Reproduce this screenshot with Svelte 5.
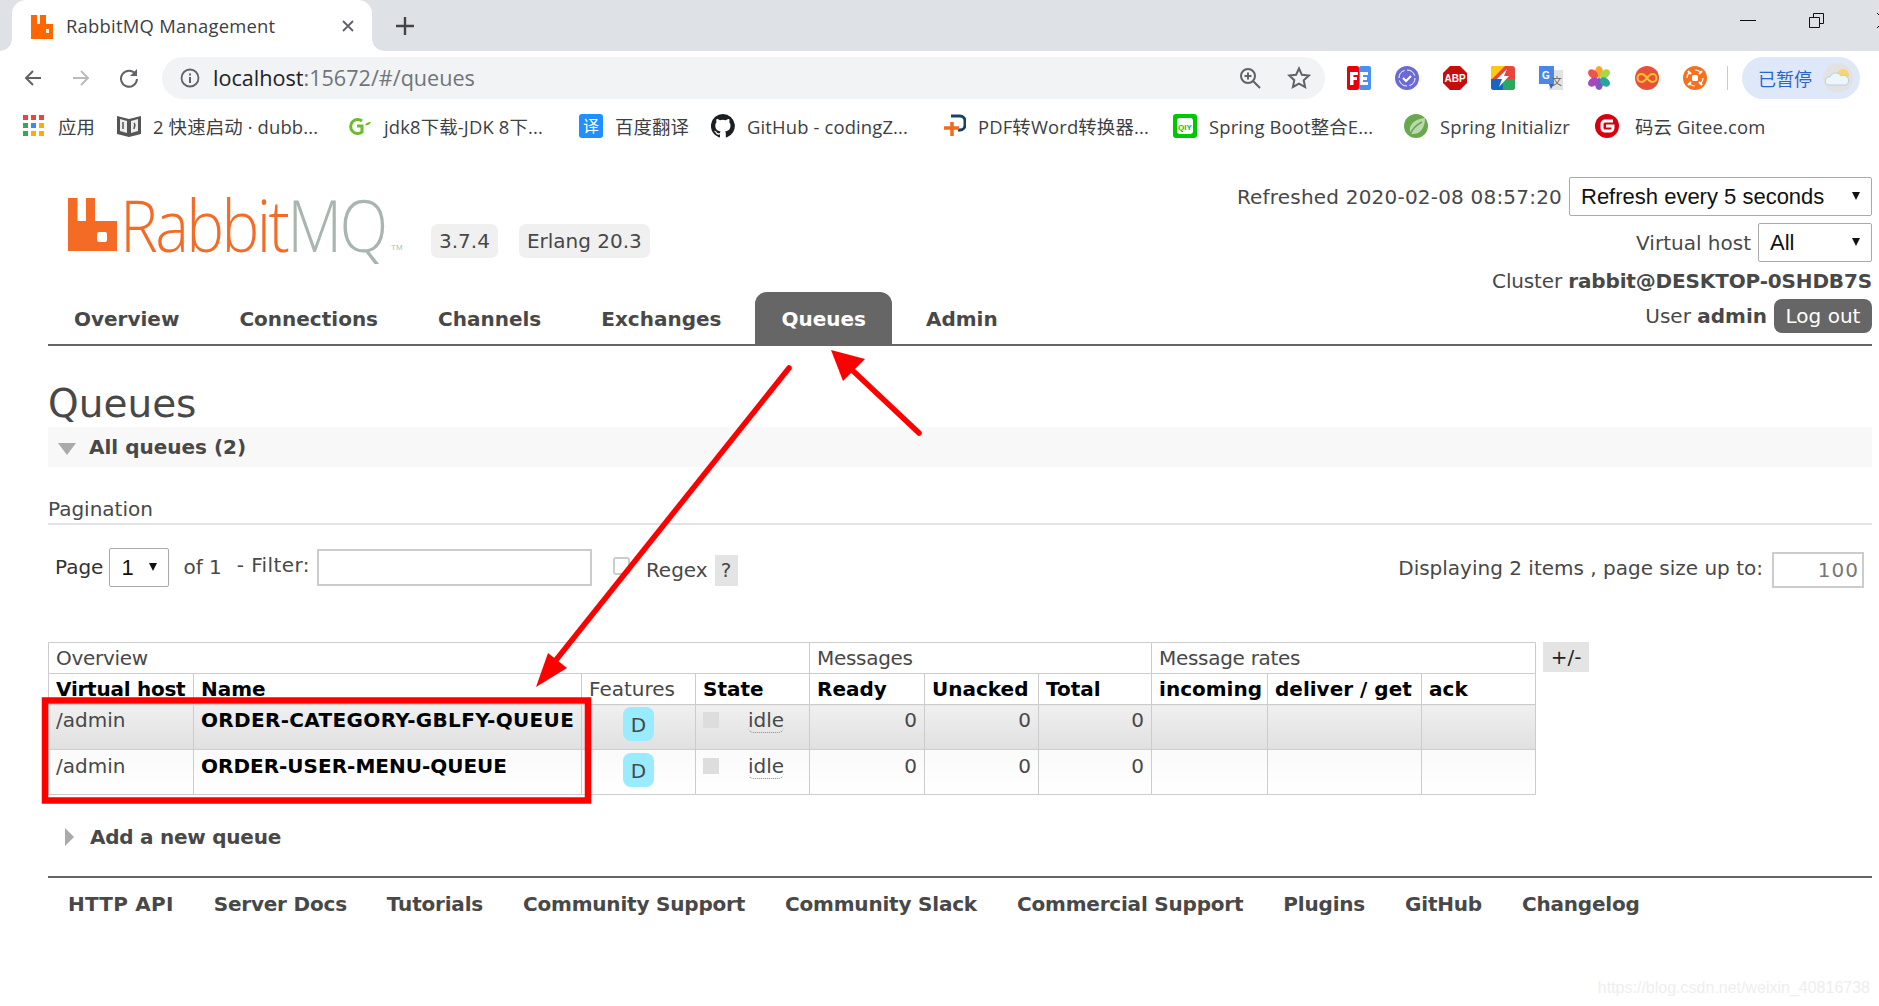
<script>
	const bookmarks = [
		{ id: 'book', label: '2 快速启动 · dubb...', w: 199 },
		{ id: 'g', label: 'jdk8下载-JDK 8下...', w: 199 },
		{ id: 'fy', label: '百度翻译', w: 100 },
		{ id: 'gh', label: 'GitHub - codingZ...', w: 199 },
		{ id: 'pdf', label: 'PDF转Word转换器...', w: 199 },
		{ id: 'iq', label: 'Spring Boot整合E...', w: 199 },
		{ id: 'spring', label: 'Spring Initializr', w: 159 },
		{ id: 'gitee', label: '码云 Gitee.com', w: 170 }
	];
	const navItems = ['Overview', 'Connections', 'Channels', 'Exchanges', 'Queues', 'Admin'];
	const footer = ['HTTP API', 'Server Docs', 'Tutorials', 'Community Support', 'Community Slack', 'Commercial Support', 'Plugins', 'GitHub', 'Changelog'];
	const queues = [
		{ name: 'ORDER-CATEGORY-GBLFY-QUEUE', cls: 'alt1' },
		{ name: 'ORDER-USER-MENU-QUEUE', cls: 'alt2' }
	];
	const colWidths = [145, 388, 114, 114, 115, 114, 113, 116, 154, 114];
</script>

<div class="root">
	<div class="tabstrip">
		<div class="tab">
			<svg class="favicon" viewBox="0 0 24 24"><path fill="#ff6600" d="M1 0h6v9h3V0h6v9h7v15H1z"/><rect x="16" y="14" width="3" height="4" fill="#fff"/></svg>
			<span class="tab-title">RabbitMQ Management</span>
			<svg class="tab-x" viewBox="0 0 12 12"><path d="M1 1l10 10M11 1L1 11" stroke="#5f6368" stroke-width="1.8"/></svg>
		</div>
		<svg class="newtab" viewBox="0 0 18 18"><path d="M9 0v18M0 9h18" stroke="#444" stroke-width="2.4"/></svg>
		<div class="winctl">
			<span class="min"></span>
			<svg class="restore" viewBox="0 0 15 15"><path d="M.5 4.5h10v10H.5zM4.500 4.500v-4h10v10h-4" fill="none" stroke="#111"/></svg>
			<svg class="restore" viewBox="0 0 15 15"><path d="M0 0l15 15M15 0L0 15" stroke="#111"/></svg>
		</div>
	</div>

	<div class="toolbar">
		<svg class="nav-ic" viewBox="0 0 20 20"><path d="M18 10H3M10 3l-7 7 7 7" fill="none" stroke="#5f6368" stroke-width="2"/></svg>
		<svg class="nav-ic" viewBox="0 0 20 20"><path d="M2 10h15M10 3l7 7-7 7" fill="none" stroke="#b9bbbe" stroke-width="2"/></svg>
		<svg class="nav-ic" viewBox="0 0 20 20"><path d="M16.500 6A8 8 0 1 0 18 11" fill="none" stroke="#5f6368" stroke-width="2"/><path d="M18 1v7h-7z" fill="#5f6368"/></svg>
		<div class="omnibox">
			<svg class="info" viewBox="0 0 20 20"><circle cx="10" cy="10" r="8.500" fill="none" stroke="#5f6368" stroke-width="1.800"/><path d="M10 9v6M10 5.500v2" stroke="#5f6368" stroke-width="2"/></svg>
			<span class="url">localhost<span class="url-rest">:15672/#/queues</span></span>
			<svg class="zoom-ic" viewBox="0 0 22 22"><circle cx="9" cy="9" r="7" fill="none" stroke="#5f6368" stroke-width="2"/><path d="M14 14l7 7M9 5.500v7M5.500 9h7" stroke="#5f6368" stroke-width="2"/></svg>
			<svg class="star" viewBox="0 0 24 24"><path d="M12 2.500l2.900 6.300 6.900.8-5.100 4.700 1.400 6.800L12 17.700 5.900 21l1.400-6.800-5.100-4.700 6.900-.8z" fill="none" stroke="#5f6368" stroke-width="2"/></svg>
		</div>
		<div class="exts">
			<svg viewBox="0 0 24 24"><rect width="12" height="24" rx="2" fill="#e8000b"/><rect x="12" width="12" height="24" rx="2" fill="#4a90f0"/><path d="M3 6h8v3H6.500v2H10v3H6.500v5H3zM13 6h8v3h-5v2h4v3h-4v2h5v3h-8z" fill="#fff"/></svg>
			<svg viewBox="0 0 24 24"><circle cx="12" cy="12" r="12" fill="#6b6bd6"/><circle cx="12" cy="12" r="8" fill="none" stroke="#fff" stroke-width="1" stroke-dasharray="10 2.500"/><path d="M8 12l3 3 5-5" fill="none" stroke="#fff" stroke-width="2"/></svg>
			<svg viewBox="0 0 24 24"><path d="M7 0h10l7 7v10l-7 7H7l-7-7V7z" fill="#c70d0c"/><text x="12" y="16" text-anchor="middle" class="abp">ABP</text></svg>
			<svg viewBox="0 0 24 24"><rect width="24" height="24" rx="3" fill="#e8453c"/><path d="M0 3a3 3 0 0 1 3-3h11L0 14z" fill="#fbcb12"/><path d="M0 13h12v11H3a3 3 0 0 1-3-3z" fill="#1667c5"/><path d="M12 13h12v8a3 3 0 0 1-3 3h-9z" fill="#28a861"/><path d="M16 3L6 13h5l-3 8 10-11h-5z" fill="#fff"/></svg>
			<svg viewBox="0 0 24 24"><rect x="10" y="4" width="14" height="20" fill="#e3e3e3"/><path d="M0 0h15v18H0z" fill="#4a86e8"/><path d="M10 18h5l-3 5z" fill="#3a62b0"/><text x="7" y="13" text-anchor="middle" class="gt">G</text><text x="18" y="19" text-anchor="middle" class="gt2">文</text></svg>
			<svg viewBox="0 0 24 24">
				<ellipse cx="12" cy="6" rx="4" ry="6" fill="#f9a825"/><ellipse cx="12" cy="18" rx="4" ry="6" fill="#7e57c2"/>
				<ellipse cx="6" cy="8" rx="4" ry="5.500" fill="#ef5350" transform="rotate(-50 6 8)"/><ellipse cx="18" cy="8" rx="4" ry="5.500" fill="#a5d64c" transform="rotate(50 18 8)"/>
				<ellipse cx="6" cy="16" rx="4" ry="5.500" fill="#ab47bc" transform="rotate(50 6 16)"/><ellipse cx="18" cy="16" rx="4" ry="5.500" fill="#26a69a" transform="rotate(-50 18 16)"/>
			</svg>
			<svg viewBox="0 0 24 24"><circle cx="12" cy="12" r="12" fill="#e94f3d"/><path d="M12 12c-2-3-3.500-4-5.500-4a4 4 0 0 0 0 8c2 0 3.500-1 5.500-4s3.500-4 5.500-4a4 4 0 0 1 0 8c-2 0-3.500-1-5.500-4z" fill="none" stroke="#f7c325" stroke-width="2"/></svg>
			<svg viewBox="0 0 24 24"><circle cx="12" cy="12" r="12" fill="#f4711f"/><rect x="9" y="9" width="6" height="6" rx="1.500" fill="#fff"/><path d="M5 5l3 3M19 5l-3 3M5 19l3-3M19 19l-3-3" stroke="#fff" stroke-width="2"/><circle cx="12" cy="12" r="8" fill="none" stroke="#fff" stroke-width="1.200" stroke-dasharray="6 6.500"/></svg>
		</div>
		<span class="divider"></span>
		<div class="paused">
			<span>已暂停</span>
			<span class="avatar">
				<svg viewBox="0 0 30 30"><circle cx="15" cy="15" r="15" fill="#e2e2e2"/><circle cx="20" cy="12" r="6" fill="#f5d76e"/><path d="M6 22a4 4 0 0 1 1-8 6 6 0 0 1 11-1 5 5 0 0 1 5 9z" fill="#eef6fb" stroke="#b8d0e2"/></svg>
			</span>
		</div>
	</div>

	<div class="bookmarks">
		<div class="bm apps">
			<span class="dots">
				<i class="r"></i><i class="r"></i><i class="r"></i>
				<i class="gr"></i><i class="b"></i><i class="y"></i>
				<i class="gr"></i><i class="y"></i><i class="y"></i>
			</span>
			<span>应用</span>
		</div>
		{#each bookmarks as bm}
			<div class="bm" style="width: {bm.w}px">
				<svg class="bm-ic" viewBox="0 0 24 24">
					{#if bm.id === 'book'}
						<path d="M0 2l12 3 12-3v18l-12 3-12-3z" fill="#555"/><path d="M3 5l7 2v12l-7-2zM21 5l-7 2v12l7-2z" fill="#eee"/><path d="M6 8v7M17 9c2 2 0 4 0 6" stroke="#555" stroke-width="1.500" fill="none"/>
					{:else if bm.id === 'g'}
						<path d="M14 7a7 7 0 1 0 0 11v-6H9" fill="none" stroke="#6cbb2d" stroke-width="3"/><path d="M17 11c2-3 4-3 6-3-1 2-3 4-6 3z" fill="#6cbb2d"/>
					{:else if bm.id === 'fy'}
						<rect width="24" height="24" rx="3" fill="#1e90ff"/><text x="12" y="18" text-anchor="middle" class="fy">译</text>
					{:else if bm.id === 'gh'}
						<path fill="#1b1f23" d="M12 0a12 12 0 0 0-3.800 23.400c.6.100.8-.3.800-.6v-2.200c-3.300.7-4-1.400-4-1.400-.6-1.400-1.400-1.800-1.400-1.800-1.100-.7.100-.7.100-.7 1.200.1 1.800 1.200 1.800 1.200 1.100 1.800 2.800 1.300 3.500 1 .1-.8.400-1.300.8-1.600-2.700-.3-5.500-1.300-5.500-5.900 0-1.300.5-2.400 1.200-3.200-.1-.3-.5-1.500.1-3.200 0 0 1-.3 3.300 1.200a11.500 11.500 0 0 1 6 0c2.300-1.500 3.300-1.200 3.300-1.200.6 1.700.2 2.900.1 3.200.8.800 1.200 1.900 1.200 3.200 0 4.600-2.800 5.600-5.500 5.900.4.400.8 1.100.8 2.200v3.300c0 .3.200.7.800.6A12 12 0 0 0 12 0z"/>
					{:else if bm.id === 'pdf'}
						<path d="M9 2h9a5 5 0 0 1 5 5v4a5 5 0 0 1-5 5h-2" fill="none" stroke="#17406b" stroke-width="3"/><path d="M10 8v14M2 14h15" stroke="#f26a1b" stroke-width="3.500"/>
					{:else if bm.id === 'iq'}
						<rect width="24" height="24" rx="3" fill="#00c800"/><rect x="4" y="4" width="16" height="16" rx="3" fill="#fff"/><text x="12" y="16" text-anchor="middle" class="iq">QIY</text>
					{:else if bm.id === 'spring'}
						<circle cx="12" cy="12" r="12" fill="#6aa84f"/><path d="M7 20C3 12 10 5 21 4c0 10-5 17-14 16z" fill="#fff" opacity=".55"/><path d="M6 21c2-6 6-10 12-13" stroke="#6aa84f" stroke-width="1.500" fill="none"/>
					{:else}
						<circle cx="12" cy="12" r="12" fill="#d7000f"/><path d="M18 7H10a3 3 0 0 0-3 3v4a3 3 0 0 0 3 3h5a3 3 0 0 0 3-3v-2h-7" fill="none" stroke="#fff" stroke-width="3"/>
					{/if}
				</svg>
				<span>{bm.label}</span>
			</div>
		{/each}
	</div>

	<div class="page">
		<header class="head">
			<div class="head-left">
				<div class="brand">
					<div class="logo">
						<svg class="logo-ic" viewBox="0 0 49 53"><path fill="#f46b25" d="M0 0h9.500v23h8.500V0h9v23h22v30H0z"/><rect x="29" y="34" width="10" height="10" rx="2" fill="#fff"/></svg>
						<span class="logo-text"><span class="rabbit">Rabbit</span><span class="mq">MQ</span></span>
						<span class="tm">TM</span>
					</div>
					<span class="badge">3.7.4</span>
					<span class="badge">Erlang 20.3</span>
				</div>
				<nav class="menu">
					{#each navItems as item}
						<a class:active={item === 'Queues'} href="#/">{item}</a>
					{/each}
				</nav>
			</div>
			<div class="head-right">
				<div class="line">
					<span class="refreshed">Refreshed 2020-02-08 08:57:20</span>
					<div class="sel refresh"><select><option>Refresh every 5 seconds</option></select></div>
				</div>
				<div class="line">
					<span>Virtual host</span>
					<div class="sel vhost"><select><option>All</option></select></div>
				</div>
				<div class="line cluster">Cluster&nbsp;<b>rabbit@DESKTOP-0SHDB7S</b></div>
				<div class="line user">
					<span>User <b>admin</b></span>
					<button class="logout">Log out</button>
				</div>
			</div>
		</header>

		<h1>Queues</h1>
		<div class="section-bar">
			<span class="tri-down"></span>
			<b>All queues (2)</b>
		</div>

		<h3 class="pag-title">Pagination</h3>
		<div class="pager">
			<span class="page-lbl">Page</span>
			<div class="sel pg"><select><option>1</option></select></div>
			<span class="of">of 1</span>
			<span class="filter-lbl">- Filter:</span>
			<input class="filter" type="text" />
			<input class="regex-box" type="checkbox" />
			<span class="regex">Regex</span>
			<span class="help">?</span>
			<span class="display">Displaying 2 items , page size up to:</span>
			<input class="size" type="text" value="100" />
		</div>

		<div class="table-row">
			<table>
				<colgroup>
					{#each colWidths as w}<col style="width: {w}px" />{/each}
				</colgroup>
				<thead>
					<tr class="group">
						<th colspan="4">Overview</th>
						<th colspan="3">Messages</th>
						<th colspan="3">Message rates</th>
					</tr>
					<tr class="cols">
						<th>Virtual host</th>
						<th>Name</th>
						<th class="plain">Features</th>
						<th>State</th>
						<th>Ready</th>
						<th>Unacked</th>
						<th>Total</th>
						<th>incoming</th>
						<th>deliver / get</th>
						<th>ack</th>
					</tr>
				</thead>
				<tbody>
					{#each queues as q}
						<tr class={q.cls}>
							<td>/admin</td>
							<td class="qname">{q.name}</td>
							<td class="feat"><span class="d">D</span></td>
							<td class="state"><span class="sq"></span><span class="idle">idle</span></td>
							<td class="num">0</td>
							<td class="num">0</td>
							<td class="num">0</td>
							<td></td>
							<td></td>
							<td></td>
						</tr>
					{/each}
				</tbody>
			</table>
			<span class="plusminus">+/-</span>
		</div>

		<div class="add-row">
			<span class="tri-right"></span>
			<b>Add a new queue</b>
		</div>

		<footer class="foot">
			{#each footer as link}<a href="#/">{link}</a>{/each}
		</footer>
	</div>

	<div class="watermark">https://blog.csdn.net/weixin_40816738</div>

	<!-- red annotations drawn over the screenshot -->
	<svg class="marks" viewBox="0 0 1879 1006">
		<rect x="45" y="700.500" width="543" height="100" fill="none" stroke="#ff0000" stroke-width="6.500"/>
		<path d="M789 368L556 660" stroke="#ff0000" stroke-width="5.500" stroke-linecap="round"/>
		<path d="M536 687L548 653L567 668z" fill="#ff0000"/>
		<path d="M919 433L850 368" stroke="#ff0000" stroke-width="5.500" stroke-linecap="round"/>
		<path d="M831 350L865 359L843 381z" fill="#ff0000"/>
	</svg>
</div>

<style>
	:global(body) {
		margin: 0;
		background: #fff;
	}
	.root {
		position: relative;
		width: 1879px;
		height: 1006px;
		overflow: hidden;
		font-family: "DejaVu Sans", Verdana, sans-serif;
		font-size: 20px;
		color: #484848;
	}

	/* browser chrome */
	.tabstrip {
		height: 51px;
		background: #dee1e6;
		display: flex;
		align-items: flex-end;
		padding-left: 12px;
	}
	.tab {
		position: relative;
		width: 360px;
		height: 51px;
		background: #fff;
		border-radius: 14px 14px 0 0;
		display: flex;
		align-items: center;
		padding: 0 18px;
		box-sizing: border-box;
		font-family: "Open Sans", "Noto Sans CJK SC", sans-serif;
		font-size: 18.4px;
		color: #3c4043;
	}
	.tab::before,
	.tab::after {
		content: "";
		position: absolute;
		bottom: 0;
		width: 12px;
		height: 12px;
	}
	.tab::before {
		left: -12px;
		background: radial-gradient(circle at 0 0, #dee1e6 11.500px, #fff 12px);
	}
	.tab::after {
		right: -12px;
		background: radial-gradient(circle at 100% 0, #dee1e6 11.500px, #fff 12px);
	}
	.favicon {
		width: 24px;
		height: 24px;
		margin-right: 12px;
		margin-top: 2px;
	}
	.tab-title {
		flex: 1;
		letter-spacing: 0.25px;
	}
	.tab-x {
		width: 12px;
		height: 12px;
		margin-left: 4px;
	}
	.newtab {
		width: 18px;
		height: 18px;
		margin: 0 0 16px 24px;
	}
	.winctl {
		margin-left: auto;
		display: flex;
		align-items: center;
		gap: 53px;
		margin-right: -13px;
		height: 40px;
		align-self: flex-start;
	}
	.min {
		width: 16px;
		height: 1px;
		background: #111;
	}
	.restore {
		width: 15px;
		height: 15px;
		flex: none;
	}
	.toolbar {
		height: 53px;
		display: flex;
		align-items: center;
		padding-left: 23px;
		font-family: "Open Sans", "Noto Sans CJK SC", sans-serif;
	}
	.nav-ic {
		width: 20px;
		height: 20px;
		margin-right: 28px;
	}
	.nav-ic:nth-child(3) {
		margin-right: 22px;
	}
	.omnibox {
		width: 1163px;
		height: 42px;
		background: #f1f3f4;
		border-radius: 21px;
		display: flex;
		align-items: center;
		padding: 0 14px 0 18px;
		box-sizing: border-box;
		margin-left: 1px;
	}
	.info {
		width: 20px;
		height: 20px;
		margin-right: 13px;
	}
	.url {
		font-size: 21.6px;
		color: #202124;
		flex: 1;
	}
	.url-rest {
		color: #70757a;
	}
	.zoom-ic {
		width: 22px;
		height: 22px;
		margin-right: 26px;
	}
	.star {
		width: 24px;
		height: 24px;
	}
	.exts {
		display: flex;
		gap: 24px;
		margin-left: 22px;
	}
	.exts svg {
		width: 24px;
		height: 24px;
		display: block;
	}
	.abp {
		font: bold 10px "Liberation Sans", sans-serif;
		fill: #fff;
	}
	.gt {
		font: bold 10px "Liberation Sans", sans-serif;
		fill: #fff;
	}
	.gt2 {
		font: 10px "Noto Sans CJK SC", sans-serif;
		fill: #666;
	}
	.fy {
		font: 16px "Noto Sans CJK SC", sans-serif;
		fill: #fff;
	}
	.iq {
		font: bold 8px "Liberation Sans", sans-serif;
		fill: #00c800;
	}
	.divider {
		width: 1px;
		height: 24px;
		background: #c8cacd;
		margin-left: 20px;
	}
	.paused {
		width: 118px;
		height: 42px;
		margin-left: 14px;
		border-radius: 21px;
		background: #dfe8f8;
		color: #2a66c9;
		font-family: "Noto Sans CJK SC", sans-serif;
		font-size: 18px;
		display: flex;
		align-items: center;
		padding-left: 16px;
		box-sizing: border-box;
		gap: 11px;
	}
	.avatar svg {
		width: 30px;
		height: 30px;
		display: block;
	}
	.bookmarks {
		height: 44px;
		display: flex;
		align-items: center;
		gap: 32px;
		padding-left: 23px;
		font-family: "Open Sans", "Noto Sans CJK SC", sans-serif;
		font-size: 18.4px;
		letter-spacing: 0.15px;
		color: #3c4043;
	}
	.bm {
		display: flex;
		align-items: center;
		gap: 12px;
		white-space: nowrap;
		flex: none;
		box-sizing: border-box;
	}
	.bm:last-child {
		gap: 16px;
	}
	.apps {
		width: 62px;
		gap: 14px;
	}
	.dots {
		display: grid;
		grid-template-columns: repeat(3, 5px);
		gap: 3px;
		margin-top: -2px;
		width: 21px;
	}
	.dots i {
		height: 5px;
	}
	.r { background: #e8453c; }
	.gr { background: #34a853; }
	.b { background: #4285f4; }
	.y { background: #fbac05; }
	.bm-ic {
		width: 24px;
		height: 24px;
		flex: none;
	}

	/* rabbit page */
	.page {
		padding: 0 7px 0 48px;
	}
	.head {
		display: flex;
		justify-content: space-between;
		border-bottom: 2px solid #666;
		height: 196px;
	}
	.head-left {
		display: flex;
		flex-direction: column;
		justify-content: space-between;
		width: 1000px;
	}
	.brand {
		display: flex;
		align-items: flex-start;
		padding-top: 50px;
		padding-left: 20px;
	}
	.logo {
		display: flex;
		align-items: flex-start;
		width: 363px;
		height: 60px;
		position: relative;
	}
	.logo-ic {
		width: 49px;
		height: 53px;
		flex: none;
	}
	.logo-text {
		font-family: "Open Sans", sans-serif;
		font-weight: 300;
		font-size: 72px;
		line-height: 53px;
		margin-left: 3px;
		letter-spacing: -3px;
		transform: scaleX(0.885);
		transform-origin: left center;
		white-space: nowrap;
		width: 262px;
	}
	.rabbit { color: #f46b25; }
	.mq { color: #a9b6af; }
	.tm {
		position: absolute;
		left: 323px;
		top: 45px;
		font-size: 8px;
		color: #b5bdb8;
		font-family: "Liberation Sans", sans-serif;
	}
	.badge {
		background: #f0f0f0;
		border-radius: 7px;
		height: 34px;
		line-height: 34px;
		padding: 0 8px;
		margin-top: 26px;
		margin-right: 21px;
	}
	.menu {
		display: flex;
		gap: 8px;
		height: 52px;
	}
	.menu a {
		display: flex;
		align-items: center;
		padding: 1px 26px 0;
		box-sizing: border-box;
		font-weight: bold;
		color: #484848;
		text-decoration: none;
		border-radius: 12px 12px 0 0;
	}
	.menu a.active {
		background: #666;
		color: #fff;
	}
	.head-right {
		display: flex;
		flex-direction: column;
		align-items: flex-end;
		padding-top: 29px;
	}
	.line {
		display: flex;
		align-items: center;
		gap: 7px;
		white-space: nowrap;
	}
	.line + .line {
		margin-top: 7px;
	}
	.refreshed {
		letter-spacing: 0.2px;
	}
	.line.cluster {
		gap: 0;
		height: 30px;
		margin-top: 4px;
		letter-spacing: -0.15px;
	}
	.line.user {
		margin-top: 3px;
	}
	.sel {
		position: relative;
		height: 39px;
	}
	.sel::after {
		content: "";
		position: absolute;
		right: 12px;
		top: 15px;
		border-left: 4px solid transparent;
		border-right: 4px solid transparent;
		border-top: 8px solid #111;
	}
	.sel select {
		appearance: none;
		width: 100%;
		height: 39px;
		box-sizing: border-box;
		border: 1px solid #aaa;
		border-radius: 2px;
		background: #fff;
		padding: 0 0 0 11px;
		font-family: "Liberation Sans", Arial, sans-serif;
		font-size: 22px;
		color: #111;
	}
	.refresh { width: 303px; }
	.vhost { width: 114px; }
	.pg { width: 60px; }
	.logout {
		width: 98px;
		height: 34px;
		border: 0;
		border-radius: 8px;
		background: #666;
		color: #fff;
		font: 20px "DejaVu Sans", Verdana, sans-serif;
		padding: 0;
	}
	h1 {
		margin: 36px 0 0;
		height: 45px;
		font-size: 39px;
		line-height: 43px;
		font-weight: normal;
		color: #484848;
	}
	.section-bar {
		height: 40px;
		background: #f8f8f8;
		display: flex;
		align-items: center;
		padding-left: 10px;
		gap: 13px;
	}
	.tri-down {
		border-left: 9.500px solid transparent;
		border-right: 9.500px solid transparent;
		border-top: 12px solid #aaa;
		margin-top: 3px;
	}
	.pag-title {
		margin: 29px 0 0;
		height: 27px;
		line-height: 26px;
		font-size: 20px;
		font-weight: normal;
		border-bottom: 2px solid #e4e4e4;
	}
	.pager {
		margin-top: 23px;
		height: 40px;
		display: flex;
		align-items: flex-start;
		white-space: nowrap;
		color: #484848;
	}
	.page-lbl {
		margin: 7px 6px 0 7px;
		color: #333;
	}
	.of {
		margin: 7px 15px 0 14px;
	}
	.filter-lbl {
		margin: 5px 7px 0 0;
		letter-spacing: 0.4px;
	}
	.filter {
		width: 275px;
		height: 37px;
		box-sizing: border-box;
		border: 2px solid #ccc;
		margin: 1px 21px 0 0;
		padding: 0;
	}
	.regex-box {
		appearance: none;
		width: 17px;
		height: 18px;
		margin: 9px 16px 0 0;
		border: 2px solid #ccc;
		border-radius: 3px;
		background: #fff;
		box-sizing: border-box;
	}
	.regex {
		margin: 10px 7px 0 0;
	}
	.help {
		width: 23px;
		height: 31px;
		background: #e4e4e4;
		margin-top: 7px;
		text-align: center;
		line-height: 31px;
	}
	.display {
		margin: 8px 9px 0 auto;
	}
	.size {
		width: 92px;
		height: 36px;
		box-sizing: border-box;
		border: 2px solid #ccc;
		margin: 4px 8px 0 0;
		padding: 0 3px 0 0;
		text-align: right;
		font: 20px "DejaVu Sans", sans-serif;
		letter-spacing: 1px;
		color: #777;
		flex: none;
	}
	.table-row {
		margin-top: 54px;
		display: flex;
		align-items: flex-start;
		gap: 7px;
	}
	table {
		table-layout: fixed;
		border-collapse: collapse;
		width: 1487px;
		flex: none;
	}
	th, td {
		border: 1px solid #ccc;
		padding: 0 7px;
		text-align: left;
		font-size: 20px;
		white-space: nowrap;
		overflow: hidden;
	}
	th {
		height: 30px;
		line-height: 30px;
		vertical-align: middle;
		background: #fff;
	}
	.group th {
		font-weight: normal;
		color: #484848;
		letter-spacing: -0.3px;
	}
	.cols th {
		color: #000;
		font-weight: bold;
	}
	.cols th:first-child {
		letter-spacing: -0.25px;
	}
	.cols th.plain {
		font-weight: normal;
		color: #484848;
	}
	td {
		height: 45px;
		vertical-align: top;
		line-height: 26px;
		padding-top: 3px;
		box-sizing: border-box;
	}
	.alt1 td {
		background: linear-gradient(#f0f0f0, #e0e0e0);
		padding-top: 2px;
	}
	.alt2 td {
		background: linear-gradient(#fafafa, #fff);
	}
	.qname {
		font-weight: bold;
		color: #000;
	}
	.alt1 .qname {
		letter-spacing: 0.33px;
	}
	.feat {
		text-align: center;
		padding: 3px 0 0;
	}
	.d {
		display: inline-block;
		width: 31px;
		height: 34px;
		line-height: 36px;
		background: #99ebff;
		border-radius: 8px;
	}
	.sq {
		display: inline-block;
		width: 16px;
		height: 16px;
		background: #ddd;
		vertical-align: top;
		margin-top: 5px;
	}
	.idle {
		margin-left: 29px;
		border-bottom: 1px dotted #888;
		border-radius: 0 0 6px 6px;
	}
	.num {
		text-align: right;
	}
	.plusminus {
		width: 46px;
		height: 30px;
		line-height: 30px;
		background: #e4e4e4;
		text-align: center;
		color: #222;
		flex: none;
	}
	.add-row {
		margin-top: 22px;
		height: 40px;
		display: flex;
		align-items: center;
		padding-left: 17px;
		gap: 16px;
		letter-spacing: -0.25px;
	}
	.tri-right {
		border-top: 9.500px solid transparent;
		border-bottom: 9.500px solid transparent;
		border-left: 9px solid #aaa;
	}
	.foot {
		margin-top: 19px;
		border-top: 2px solid #666;
		padding: 13px 0 0 20px;
		display: flex;
		gap: 40px;
		line-height: 26px;
		letter-spacing: -0.2px;
	}
	.foot a {
		font-weight: bold;
		color: #484848;
		text-decoration: none;
	}
	.foot a:first-child {
		letter-spacing: 0.25px;
	}
	.watermark {
		position: absolute;
		right: 9px;
		top: 979px;
		font: 16px "Liberation Sans", sans-serif;
		color: #eeeeee;
	}
	.marks {
		position: absolute;
		left: 0;
		top: 0;
		width: 1879px;
		height: 1006px;
		pointer-events: none;
	}
</style>
